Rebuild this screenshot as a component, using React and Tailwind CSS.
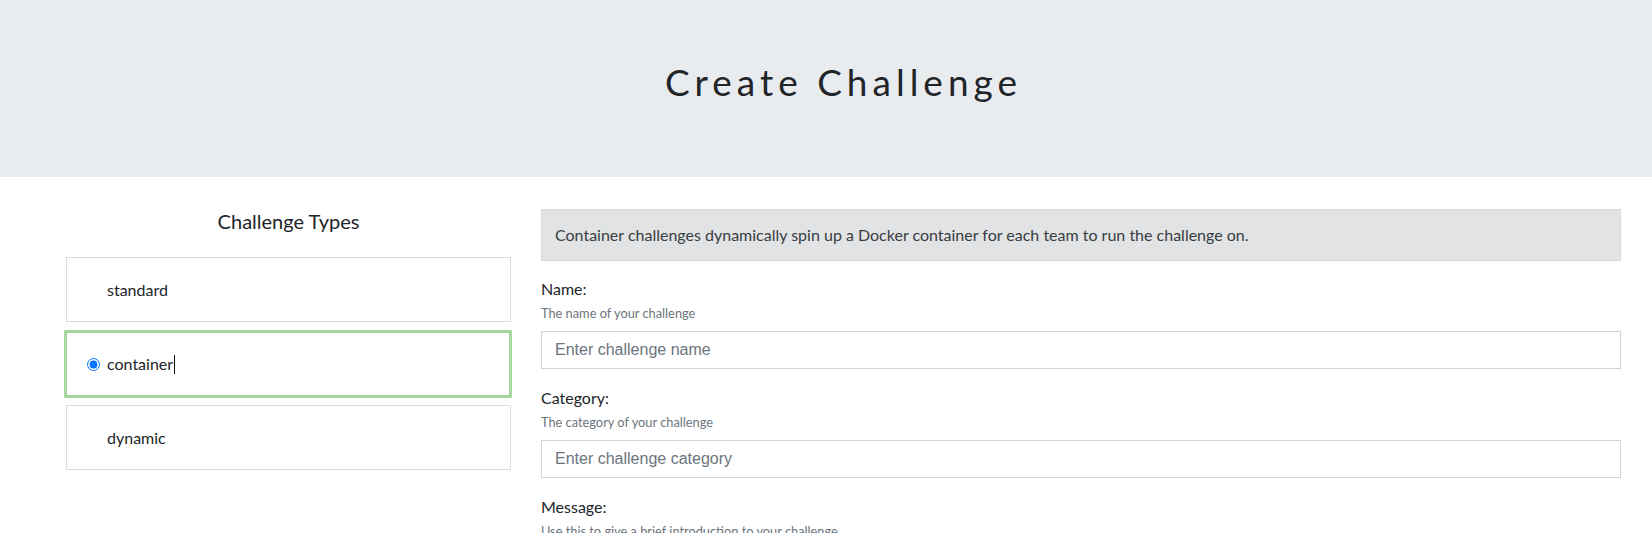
import React from "react";

const types = ["standard", "container", "dynamic"];

const Field = ({ label, help, placeholder }) => (
  <div className="mb-[17px]">
    <div className="text-[16px] leading-[24px] text-[#212529]">{label}</div>
    <div className="mt-[3px] text-[12.8px] leading-[19.2px] text-[#6c757d]">{help}</div>
    {placeholder && (
      <input
        type="text"
        placeholder={placeholder}
        className="mt-2 block h-[38px] w-full border border-[#ced4da] bg-white px-[13px] text-[16px] text-[#495057] placeholder:text-[#6c757d] outline-none"
        style={{ fontFamily: '"Liberation Sans", Arial, sans-serif' }}
      />
    )}
  </div>
);

export default function App() {
  const selected = "container";

  return (
    <div className="min-h-screen bg-white text-[#212529]" style={{ fontFamily: 'Lato, "Noto Sans", sans-serif' }}>
      {/* Header */}
      <div className="flex h-[177px] items-center justify-center bg-[#e9ecef] pb-[14px] pl-[66px] pr-[31px]">
        <h1 className="text-[37px] font-normal leading-[43px] tracking-[5px] text-[#212529]">
          Create Challenge
        </h1>
      </div>

      {/* Body */}
      <div className="flex gap-[30px] pl-[66px] pr-[31px] pt-[32px]">
        {/* Challenge types */}
        <div className="w-[445px] shrink-0">
          <h3 className="text-center text-[20px] leading-[24px] text-[#212529]">Challenge Types</h3>
          <div className="mt-[24px] flex flex-col">
            {types.map((t, i) => {
              const on = t === selected;
              return (
                <label
                  key={t}
                  className={
                    on
                      ? "-ml-[2px] -mr-[1px] mt-[8px] flex h-[68px] items-center border-[3px] border-[#a6d8a2] pl-[20px]"
                      : `flex h-[65px] items-center border border-[#dcdcdc] pl-[20px] ${i === 2 ? "mt-[7px]" : ""}`
                  }
                >
                  <span className="mr-[7px] flex w-[13px] items-center">
                    {on && (
                      <input
                        type="radio"
                        name="type"
                        checked
                        readOnly
                        className="m-0 h-[13px] w-[13px] accent-[#0075ff]"
                      />
                    )}
                  </span>
                  <span className="text-[16px] leading-[24px] text-[#212529]">{t}</span>
                  {on && <span className="ml-[1px] h-[19px] w-px bg-[#111]" />}
                </label>
              );
            })}
          </div>
        </div>

        {/* Form */}
        <div className="min-w-0 flex-1">
          <div className="mb-[16px] border border-[#d6d8db] bg-[#e2e3e5] px-[13px] py-[13px] text-[16px] leading-[24px] text-[#383d41]">
            Container challenges dynamically spin up a Docker container for each team to run the challenge on.
          </div>
          <Field label="Name:" help="The name of your challenge" placeholder="Enter challenge name" />
          <Field label="Category:" help="The category of your challenge" placeholder="Enter challenge category" />
          <Field label="Message:" help="Use this to give a brief introduction to your challenge." />
        </div>
      </div>
    </div>
  );
}
